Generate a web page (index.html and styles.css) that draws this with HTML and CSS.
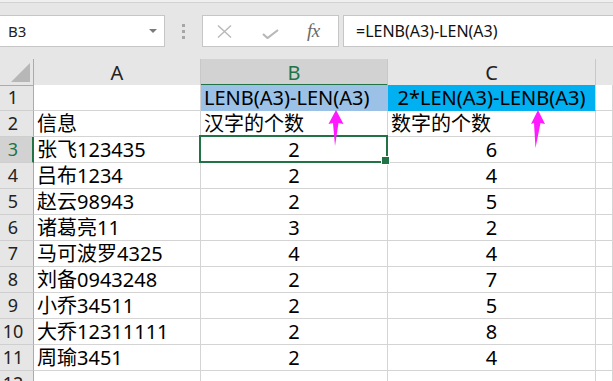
FILE: index.html
```html
<!DOCTYPE html>
<html lang="zh-CN">
<head>
<meta charset="utf-8">
<title>Excel LENB</title>
<link rel="stylesheet" href="styles.css">
</head>
<body>
<div class="app">
  <div class="topstrip"></div>
  <div class="toolbar">
    <div class="namebox"><span class="nb-text">B3</span><span class="nb-caret"></span></div>
    <div class="grip"><i></i><i></i><i></i></div>
    <div class="fnbox">
      <svg class="ic-x" width="15" height="13" viewBox="0 0 15 13"><path d="M1 0.5 L14 12.5 M14 0.5 L1 12.5" stroke="#b8b8b8" stroke-width="1.4" fill="none"/></svg>
      <svg class="ic-check" width="17" height="10" viewBox="0 0 17 10"><path d="M1 5 L5.5 9 L16 1" stroke="#b8b8b8" stroke-width="2.2" fill="none"/></svg>
      <span class="fx"><i>f</i><i>x</i></span>
    </div>
    <div class="formula">=LENB(A3)-LEN(A3)</div>
  </div>

  <div class="sheet">
    <div class="hd corner"><span class="tri"></span></div>
    <div class="hd col">A</div>
    <div class="hd col sel">B</div>
    <div class="hd col">C</div>
    <div class="hd col last"></div>

    <div class="rh">1</div><div class="c"></div><div class="c fill-b t">LENB(A3)-LEN(A3)</div><div class="c fill-c ctr">2*LEN(A3)-LENB(A3)</div><div class="c"></div>
    <div class="rh">2</div><div class="c t">信息</div><div class="c t">汉字的个数</div><div class="c t">数字的个数</div><div class="c"></div>
    <div class="rh rsel">3</div><div class="c t">张飞123435</div><div class="c ctr active">2</div><div class="c ctr">6</div><div class="c"></div>
    <div class="rh">4</div><div class="c t">吕布1234</div><div class="c ctr">2</div><div class="c ctr">4</div><div class="c"></div>
    <div class="rh">5</div><div class="c t">赵云98943</div><div class="c ctr">2</div><div class="c ctr">5</div><div class="c"></div>
    <div class="rh">6</div><div class="c t">诸葛亮11</div><div class="c ctr">3</div><div class="c ctr">2</div><div class="c"></div>
    <div class="rh">7</div><div class="c t">马可波罗4325</div><div class="c ctr">4</div><div class="c ctr">4</div><div class="c"></div>
    <div class="rh">8</div><div class="c t">刘备0943248</div><div class="c ctr">2</div><div class="c ctr">7</div><div class="c"></div>
    <div class="rh">9</div><div class="c t">小乔34511</div><div class="c ctr">2</div><div class="c ctr">5</div><div class="c"></div>
    <div class="rh">10</div><div class="c t">大乔12311111</div><div class="c ctr">2</div><div class="c ctr">8</div><div class="c"></div>
    <div class="rh">11</div><div class="c t">周瑜3451</div><div class="c ctr">2</div><div class="c ctr">4</div><div class="c"></div>
    <div class="rh">12</div><div class="c"></div><div class="c"></div><div class="c"></div><div class="c"></div>
  </div>

  <svg class="arrows" width="613" height="381" viewBox="0 0 613 381">
    <polygon points="336,110 343.5,124 338.5,123 335,146 333,123 328.5,124" fill="#ff1aff"/>
    <polygon points="538,110 545,124 540.5,123 535.5,148 534,123 531,124" fill="#ff1aff"/>
  </svg>
</div>
</body>
</html>
```

FILE: styles.css
```css
* { box-sizing: border-box; }
html, body { margin: 0; padding: 0; }
body {
  width: 613px;
  height: 381px;
  overflow: hidden;
  background: #e6e6e6;
  font-family: "Noto Sans", "Noto Sans CJK SC", sans-serif;
  color: #000;
}
.app { position: relative; width: 613px; height: 381px; overflow: hidden; }

.topstrip {
  height: 3px;
  background: #efefef;
  border-bottom: 1px solid #d2d2d2;
}

.toolbar {
  display: flex;
  align-items: flex-start;
  height: 56px;
  padding-top: 12px;
}
.namebox {
  width: 165px;
  height: 32px;
  background: #fff;
  border: 1px solid #c6c6c6;
  border-left: none;
  display: flex;
  align-items: center;
  justify-content: space-between;
  padding: 0 7px 0 8px;
}
.nb-text { font-size: 15px; color: #222; }
.nb-caret {
  width: 0; height: 0;
  border-left: 4px solid transparent;
  border-right: 4px solid transparent;
  border-top: 4px solid #7a7a7a;
}
.grip {
  margin-left: 17px;
  width: 3px;
  height: 32px;
  display: flex;
  flex-direction: column;
  justify-content: center;
  gap: 3px;
}
.grip i { display: block; width: 3px; height: 3px; background: #a6a6a6; }
.fnbox {
  margin-left: 17px;
  width: 137px;
  height: 32px;
  background: #fff;
  border: 1px solid #c6c6c6;
  display: flex;
  align-items: center;
  padding-left: 14px;
}
.ic-x { margin-top: 1px; }
.ic-check { margin-left: 30px; margin-top: 5px; }
.fx {
  margin-left: 28px;
  font-family: "Liberation Serif", "DejaVu Serif", serif;
  font-size: 19px;
  color: #6a6a6a;
  font-style: italic;
  letter-spacing: -0.5px;
}
.fx i { font-style: italic; }
.formula {
  margin-left: 4px;
  flex: 1;
  height: 32px;
  background: #fff;
  border: 1px solid #c6c6c6;
  border-right: none;
  font-size: 16px;
  line-height: 30px;
  padding-left: 12px;
  color: #111;
}

.sheet {
  display: grid;
  grid-template-columns: 34px 167px 187px 208px 1fr;
  grid-auto-rows: 26px;
}
.hd {
  height: 27px;
  background: #e6e6e6;
  border-right: 1px solid #c8c8c8;
  border-bottom: 1px solid #ababab;
  font-size: 20px;
  line-height: 26px;
  text-align: center;
  color: #222;
  padding-top: 1px;
}
.hd.corner { position: relative; border-right-color: #ababab; }
.tri {
  position: absolute;
  left: 11px;
  top: 4px;
  width: 0; height: 0;
  border-left: 19px solid transparent;
  border-bottom: 19px solid #b7b7b7;
}
.hd.sel {
  background: #d2d2d2;
  color: #217346;
  border-bottom: 2px solid #217346;
}
.hd.last { border-right: none; }

.rh {
  background: #e6e6e6;
  border-right: 1px solid #ababab;
  border-bottom: 1px solid #cfcfcf;
  font-size: 18px;
  line-height: 25px;
  text-align: center;
  padding-right: 7px;
  color: #222;
}
.rh.rsel {
  background: #d2d2d2;
  color: #217346;
  border-right: 2px solid #217346;
  padding-right: 6px;
}

.c {
  background: #fff;
  border-right: 1px solid #d4d4d4;
  border-bottom: 1px solid #d4d4d4;
  font-size: 20px;
  line-height: 25px;
  white-space: nowrap;
  overflow: visible;
}
.c.t { padding-left: 3px; }
.c.ctr { text-align: center; }
.c.fill-b { background: #9bc2e6; border-color: #9bc2e6; }
.c.fill-c { background: #00b0f0; border-bottom-color: #00b0f0; }

.c.active { position: relative; }
.c.active::after {
  content: "";
  position: absolute;
  top: -2px; left: -2px; right: -1px; bottom: -1px;
  border: 2px solid #217346;
}
.c.active::before {
  content: "";
  position: absolute;
  right: -3px;
  bottom: -3px;
  width: 7px;
  height: 7px;
  background: #217346;
  border: 1px solid #fff;
  z-index: 2;
}

.arrows {
  position: absolute;
  left: 0;
  top: 0;
  pointer-events: none;
}
```
